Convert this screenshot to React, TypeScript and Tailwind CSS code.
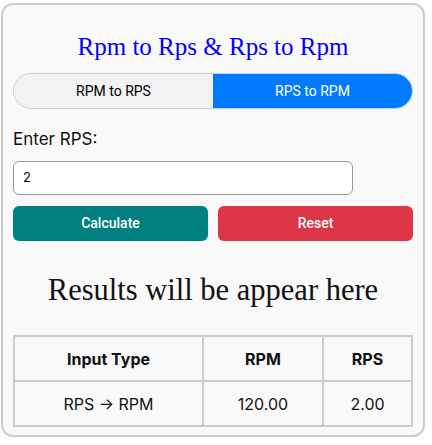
export default function App() {
  return (
    <div className="min-h-[445px] w-[432px] bg-white">
      <div className="ml-[1px] mt-[3px] w-[424px] h-[434px] rounded-[12px] border-2 border-[#cccccc] bg-[#f9f9f9] px-[10px] pt-[10px]">
        <h1
          className="mt-[16px] h-[32px] text-center text-[25px] leading-[32px] text-[#0000ff]"
          style={{ fontFamily: '"Liberation Serif", serif' }}
        >
          Rpm to Rps &amp; Rps to Rpm
        </h1>
        <div
          className="mt-[10px] flex h-[36px] w-[400px] overflow-hidden rounded-full border border-[#cccccc] text-[14px]"
          style={{ fontFamily: 'Roboto, "Liberation Sans", sans-serif' }}
        >
          <div className="flex w-1/2 items-center justify-center bg-[#f2f2f2] text-black">RPM to RPS</div>
          <div className="flex w-1/2 items-center justify-center bg-[#007bff] text-white">RPS to RPM</div>
        </div>
        <div
          className="mt-[18px] text-[17px] leading-[24px] text-[#111]"
          style={{ fontFamily: 'Inter, sans-serif' }}
        >
          Enter RPS:
        </div>
        <div className="mt-[10px] flex h-[34px] w-[340px] items-center rounded-[6px] border border-[#999999] bg-white px-[9px] text-[13px] text-black" style={{ fontFamily: 'Inter, sans-serif' }}>
          2
        </div>
        <div className="mt-[11px] flex gap-[10px] text-[14px] font-medium text-white" style={{ fontFamily: 'Roboto, "Liberation Sans", sans-serif' }}>
          <div className="flex h-[35px] flex-1 items-center justify-center rounded-[6px] bg-[#008080]">Calculate</div>
          <div className="flex h-[35px] flex-1 items-center justify-center rounded-[6px] bg-[#dc3545]">Reset</div>
        </div>
        <div
          className="mt-[30px] text-center text-[30.5px] leading-[38px] text-[#111]"
          style={{ fontFamily: '"Liberation Serif", serif' }}
        >
          Results will be appear here
        </div>
        <table
          className="mt-[26px] w-[400px] border-collapse text-[16px] text-[#111]"
          style={{ fontFamily: 'Inter, sans-serif' }}
        >
          <thead>
            <tr className="h-[45px]">
              <th className="w-[189px] border-2 border-[#cccccc] font-bold">Input Type</th>
              <th className="w-[120px] border-2 border-[#cccccc] font-bold">RPM</th>
              <th className="border-2 border-[#cccccc] font-bold">RPS</th>
            </tr>
          </thead>
          <tbody>
            <tr className="h-[45px]">
              <td className="border-2 border-[#cccccc] text-center">RPS → RPM</td>
              <td className="border-2 border-[#cccccc] text-center">120.00</td>
              <td className="border-2 border-[#cccccc] text-center">2.00</td>
            </tr>
          </tbody>
        </table>
      </div>
    </div>
  );
}
